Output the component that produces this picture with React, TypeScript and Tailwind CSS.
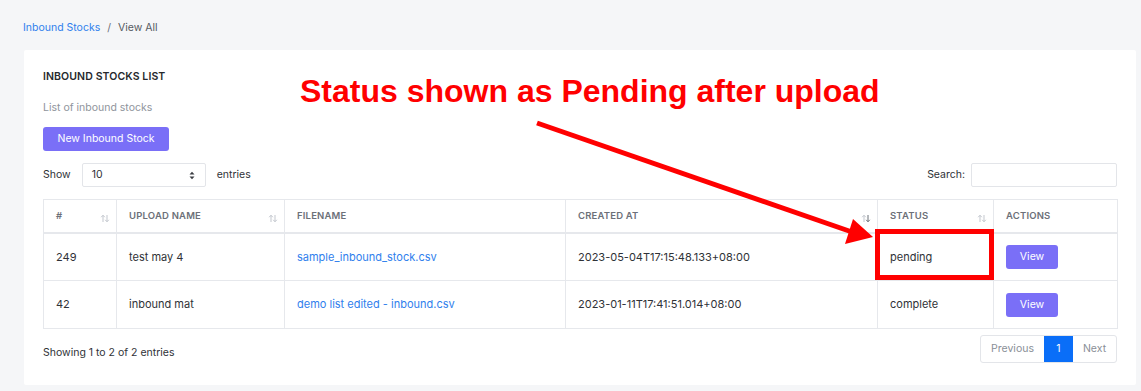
import React from 'react';

const font = { fontFamily: 'Inter, "Noto Sans", sans-serif' };

type Row = { id: number; name: string; file: string; created: string; status: string };

const rows: Row[] = [
    { id: 249, name: 'test may 4', file: 'sample_inbound_stock.csv', created: '2023-05-04T17:15:48.133+08:00', status: 'pending' },
    { id: 42, name: 'inbound mat', file: 'demo list edited - inbound.csv', created: '2023-01-11T17:41:51.014+08:00', status: 'complete' },
];

const SortIcon: React.FC<{ down?: boolean }> = ({ down }) => (
    <svg width="10" height="9" viewBox="0 0 10 9" className="absolute right-[6px] top-[14px]">
        <path d="M3 8V1.5M1.2 3.2L3 1.2L4.8 3.2" stroke="#c3c7ce" strokeWidth="1" fill="none" />
        <path d="M7 1v6.5M5.2 5.8L7 7.8L8.8 5.8" stroke={down ? '#6b7079' : '#c3c7ce'} strokeWidth="1" fill="none" />
    </svg>
);

const Th: React.FC<{ label: string; w: string; sort?: boolean; down?: boolean }> = ({ label, w, sort, down }) => (
    <th className={`relative ${w} h-[33px] border-r border-[#e6e8ec] px-[12px] text-left align-middle text-[9.5px] font-semibold uppercase tracking-[0.02em] text-[#6c7079] last:border-r-0`}>
        {label}
        {sort && <SortIcon down={down} />}
    </th>
);

const App: React.FC = () => {
    return (
        <div className="relative min-h-[391px] w-[1141px] overflow-hidden bg-[#f5f6f8] text-[#2f3237]" style={font}>
            <div className="px-[23px] pt-[20px] text-[10.5px] leading-[16px]">
                <span className="text-[#2f80ed]">Inbound Stocks</span>
                <span className="mx-[7px] text-[#6c7079]">/</span>
                <span className="text-[#555a62]">View All</span>
            </div>

            <div className="ml-[24px] mt-[14px] w-[1112px] rounded-[2px] bg-white px-[19px] pb-[22px] pt-[20px]">
                <div className="text-[10.5px] font-semibold leading-[14px] tracking-[0.01em] text-[#26292d]">INBOUND STOCKS LIST</div>
                <div className="mt-[17px] text-[10.5px] leading-[14px] text-[#8f949c]">List of inbound stocks</div>
                <button className="mt-[12px] h-[24px] w-[126px] rounded-[3px] bg-[#7a6ff7] text-[10.5px] text-white">New Inbound Stock</button>

                <div className="mt-[12px] flex h-[24px] items-center justify-between text-[10.5px]">
                    <div className="flex items-center">
                        <span>Show</span>
                        <div className="ml-[11px] flex h-[24px] w-[124px] items-center justify-between rounded-[2px] border border-[#e3e5e9] pl-[9px] pr-[10px]">
                            <span>10</span>
                            <svg width="6" height="9" viewBox="0 0 6 9">
                                <path d="M0.5 3.5L3 0.8L5.5 3.5Z M0.5 5.5L3 8.2L5.5 5.5Z" fill="#3a3d42" />
                            </svg>
                        </div>
                        <span className="ml-[11px]">entries</span>
                    </div>
                    <div className="flex items-center">
                        <span>Search:</span>
                        <div className="ml-[6px] h-[24px] w-[146px] rounded-[2px] border border-[#e3e5e9]" />
                    </div>
                </div>

                <table className="mt-[12px] w-[1074px] table-fixed border-collapse border border-[#e6e8ec]">
                    <thead>
                        <tr className="border-b-[2px] border-[#e6e8ec]">
                            <Th label="#" w="w-[73px]" sort />
                            <Th label="Upload Name" w="w-[168px]" sort />
                            <Th label="Filename" w="w-[281px]" />
                            <Th label="Created At" w="w-[312px]" sort down />
                            <Th label="Status" w="w-[116px]" sort />
                            <Th label="Actions" w="w-[124px]" />
                        </tr>
                    </thead>
                    <tbody>
                        {rows.map(r => (
                            <tr key={r.id} className="h-[48px] border-b border-[#e6e8ec] text-[11px]">
                                <td className="border-r border-[#e6e8ec] px-[12px]">{r.id}</td>
                                <td className="border-r border-[#e6e8ec] px-[12px]">{r.name}</td>
                                <td className="border-r border-[#e6e8ec] px-[12px] text-[#2f80ed]">{r.file}</td>
                                <td className="border-r border-[#e6e8ec] px-[12px]">{r.created}</td>
                                <td className="border-r border-[#e6e8ec] px-[12px]">{r.status}</td>
                                <td className="px-[12px]">
                                    <button className="h-[24px] w-[52px] rounded-[3px] bg-[#7a6ff7] text-[10.5px] text-white">View</button>
                                </td>
                            </tr>
                        ))}
                    </tbody>
                </table>

                <div className="mt-[6px] flex items-center justify-between">
                    <span className="pt-[8px] text-[10.5px]">Showing 1 to 2 of 2 entries</span>
                    <div className="flex h-[28px] overflow-hidden rounded-[3px] border border-[#e3e5e9] text-[10.5px]">
                        <span className="flex w-[63px] items-center justify-center text-[#8a8f97]">Previous</span>
                        <span className="flex w-[29px] items-center justify-center bg-[#0a6ef8] text-white">1</span>
                        <span className="flex w-[43px] items-center justify-center text-[#8a8f97]">Next</span>
                    </div>
                </div>
            </div>

            {/* annotation overlay */}
            <div className="absolute left-[300px] top-[71px] text-[32px] font-bold leading-[40px] text-[#ff0000]" style={{ fontFamily: '"Liberation Sans", Arial, sans-serif' }}>
                Status shown as Pending after upload
            </div>
            <svg className="pointer-events-none absolute left-0 top-0" width="1141" height="391">
                <line x1="537" y1="123" x2="852" y2="232" stroke="#ff0000" strokeWidth="5" />
                <polygon points="873,237 853,219 845,244" fill="#ff0000" />
                <rect x="877.5" y="231.5" width="114" height="46" stroke="#ff0000" strokeWidth="5" fill="none" />
            </svg>
        </div>
    );
};

export default App;
